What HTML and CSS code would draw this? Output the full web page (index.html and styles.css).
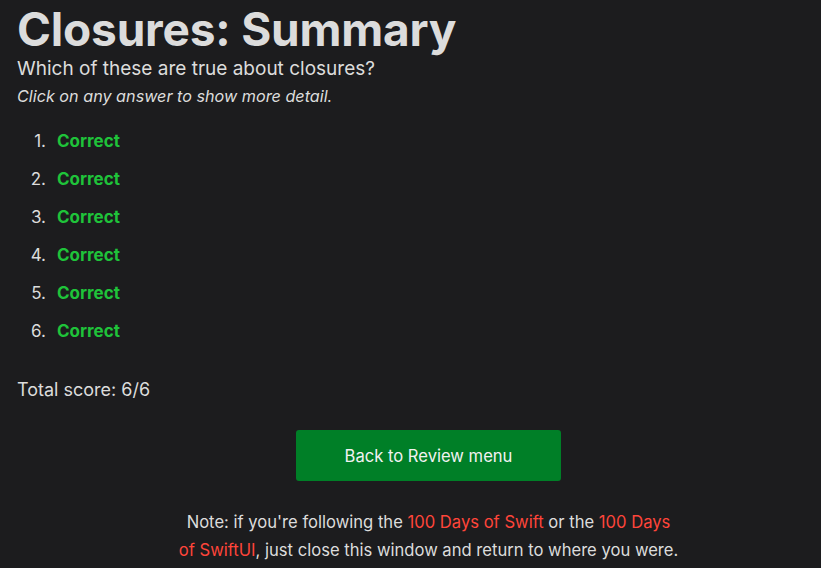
FILE: index.html
```html
<!DOCTYPE html>
<html lang="en">
<head>
<meta charset="utf-8">
<title>Closures: Summary</title>
<link rel="stylesheet" href="styles.css">
</head>
<body>
<main class="page">
  <h1 class="title">Closures: Summary</h1>
  <p class="question">Which of these are true about closures?</p>
  <p class="hint">Click on any answer to show more detail.</p>
  <ol class="answers">
    <li><span class="correct">Correct</span></li>
    <li><span class="correct">Correct</span></li>
    <li><span class="correct">Correct</span></li>
    <li><span class="correct">Correct</span></li>
    <li><span class="correct">Correct</span></li>
    <li><span class="correct">Correct</span></li>
  </ol>
  <p class="score">Total score: 6/6</p>
  <div class="footer">
    <a class="back-btn" href="#">Back to Review menu</a>
    <p class="note">Note: if you're following the <a href="#">100 Days of Swift</a> or the <a href="#">100 Days of SwiftUI</a>, just close this window and return to where you were.</p>
  </div>
</main>
</body>
</html>
```
FILE: styles.css
```css
html, body {
  margin: 0;
  padding: 0;
  background: #1c1c1e;
}
body {
  font-family: Inter, "Noto Sans", sans-serif;
  color: #dcdcdc;
}
.page {
  padding: 0 0 0 17px;
}
.title {
  margin: 0;
  padding-top: 3px;
  font-size: 46px;
  font-weight: 700;
  line-height: 52px;
  letter-spacing: -0.2px;
  color: #dcdcdc;
}
.question {
  margin: 1px 0 0;
  font-size: 19px;
  line-height: 26px;
}
.hint {
  margin: 3px 0 0;
  font-size: 16.2px;
  font-style: italic;
  line-height: 22px;
}
.answers {
  margin: 23px 0 0;
  padding: 0;
  list-style: none;
  counter-reset: item;
  font-size: 17px;
}
.answers li {
  display: flex;
  counter-increment: item;
  line-height: 22px;
  margin-bottom: 16px;
}
.answers li::before {
  content: counter(item) ".";
  width: 29px;
  margin-right: 11px;
  text-align: right;
  color: #dcdcdc;
}
.correct {
  color: #1fc33a;
  font-weight: 700;
}
.score {
  margin: 36px 0 0;
  font-size: 18px;
  line-height: 24px;
}
.footer {
  margin-left: 19px;
  display: flex;
  flex-direction: column;
  align-items: center;
  padding-top: 28px;
}
.back-btn {
  display: flex;
  align-items: center;
  justify-content: center;
  width: 265px;
  height: 51px;
  background: #007f27;
  color: #f2f2f2;
  border-radius: 3px;
  font-size: 16.6px;
  text-decoration: none;
}
.note {
  margin: 27px 0 0;
  max-width: 500px;
  text-align: center;
  font-size: 16.6px;
  line-height: 28px;
}
.note a {
  color: #ff453a;
  text-decoration: none;
}
```
